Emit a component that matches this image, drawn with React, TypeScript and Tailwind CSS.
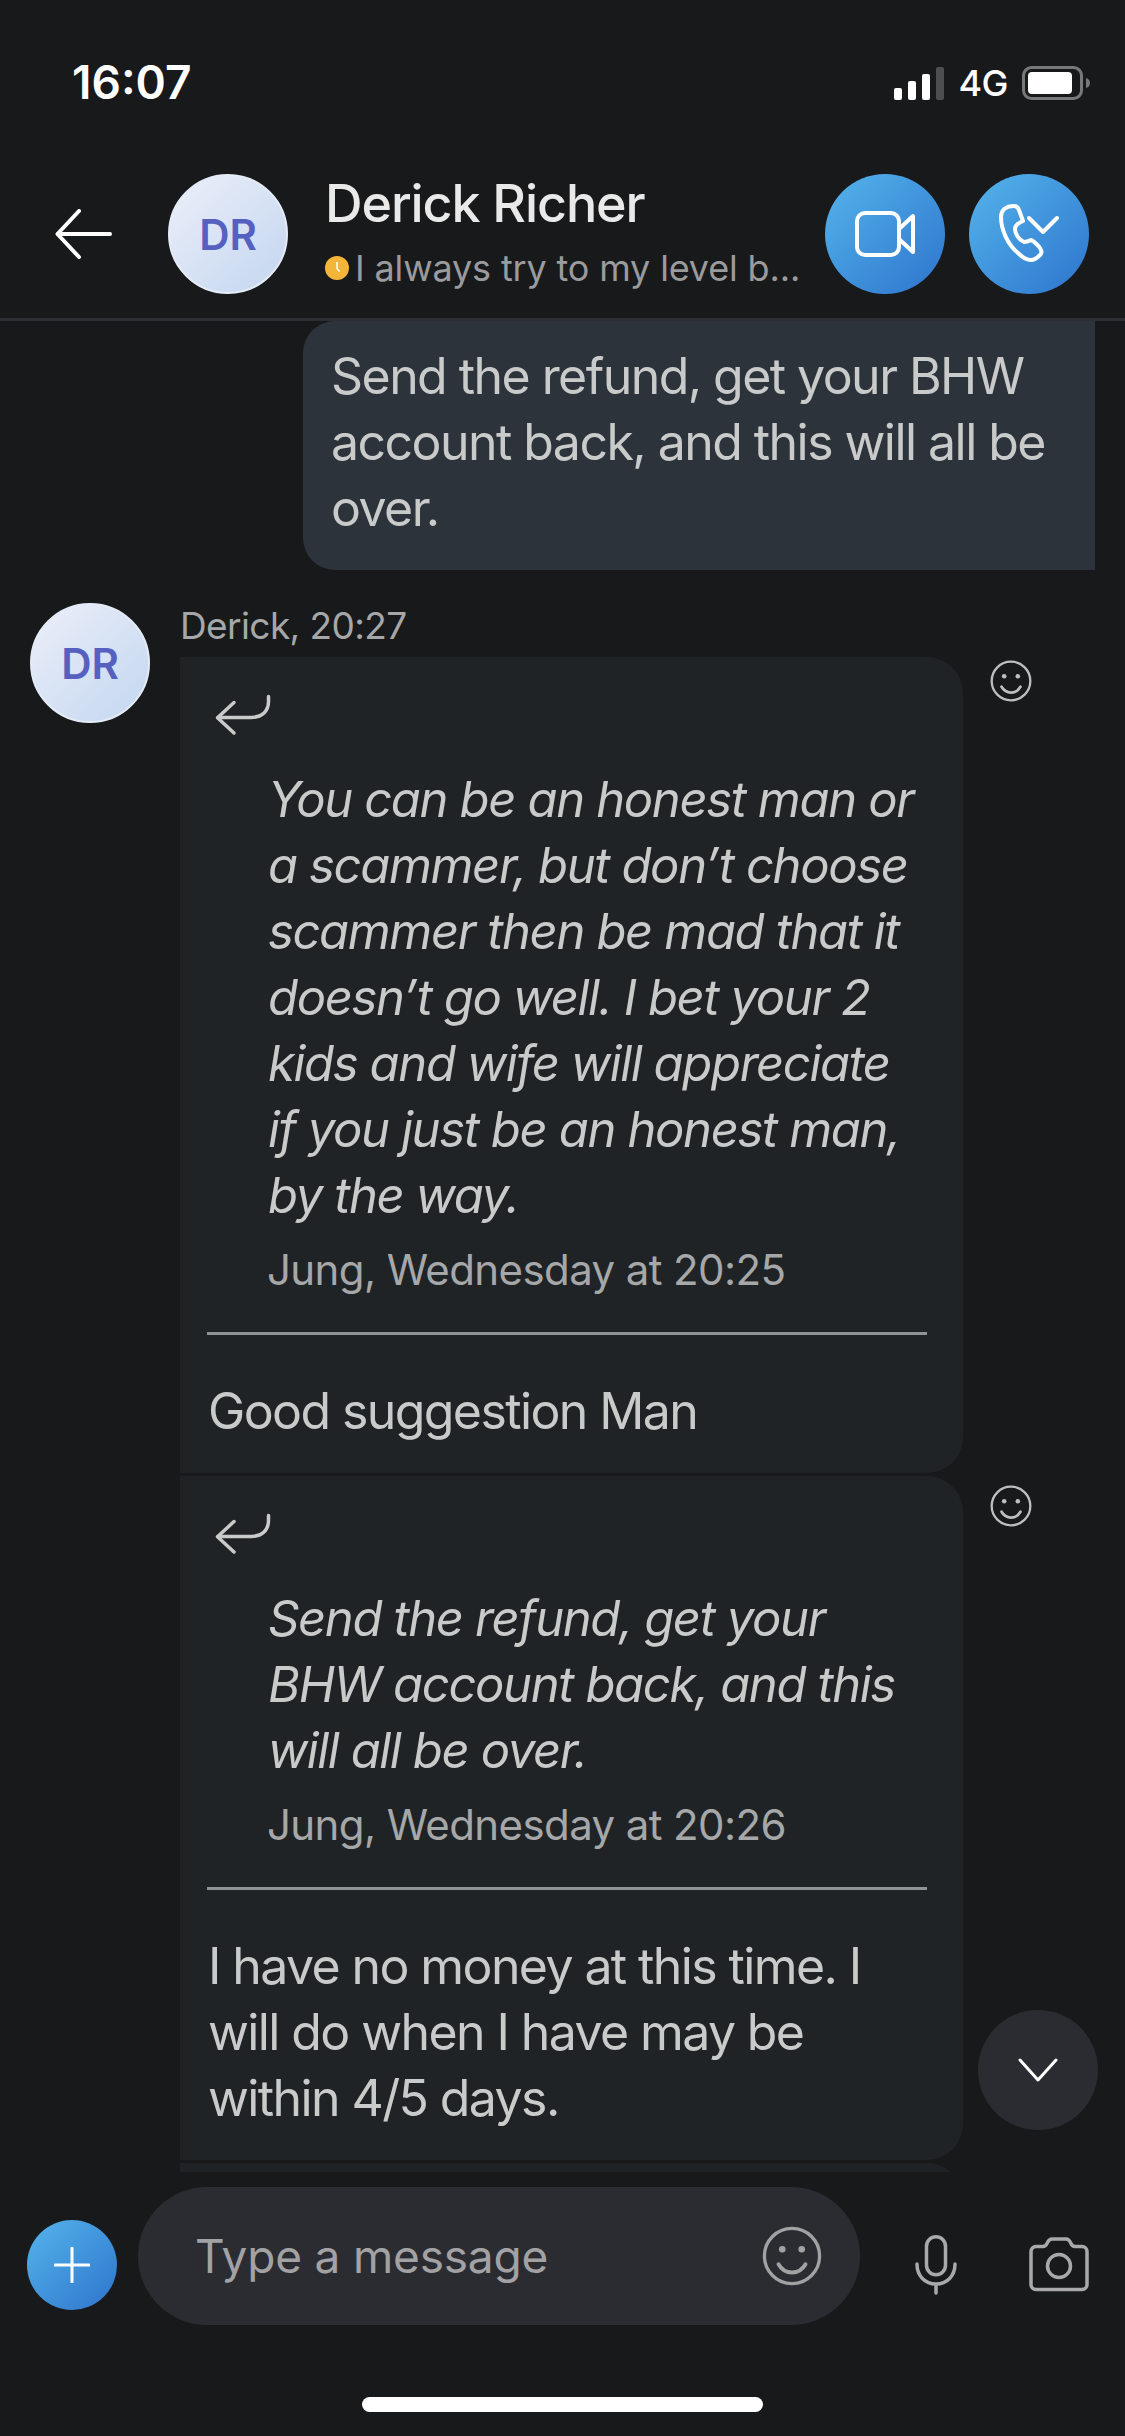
const font = "font-['Inter','Roboto',sans-serif]";

function Avatar() {
  return (
    <div className="flex h-[120px] w-[120px] shrink-0 items-center justify-center rounded-full border-2 border-[#e4ebf7] bg-gradient-to-br from-[#eceff9] to-[#c3d6f0] text-[42px] font-semibold text-[#5560c0]">
      DR
    </div>
  );
}

function Smile({ className }: { className: string }) {
  return (
    <svg viewBox="0 0 40 40" fill="none" stroke="currentColor" strokeWidth="2.2" strokeLinecap="round" className={className}>
      <circle cx="20" cy="20" r="18.4" />
      <circle cx="13.5" cy="15.5" r="2.200" fill="currentColor" stroke="none" />
      <circle cx="26.5" cy="15.5" r="2.200" fill="currentColor" stroke="none" />
      <path d="M11 25.500c2 3.500 5 5.500 9 5.500s7-2 9-5.500" strokeWidth="2.600" />
    </svg>
  );
}

function ReplyArrow() {
  return (
    <svg viewBox="0 0 56 42" fill="none" stroke="#c9caca" strokeWidth="3.5" strokeLinecap="round" strokeLinejoin="round" className="h-[42px] w-[56px]">
      <path d="M53.500 2.500v5c0 10-7 16-17 16H3" />
      <path d="M19 8.500 2.500 23.700 19 39" />
    </svg>
  );
}

function QuotedBubble({
  quote,
  stamp,
  reply,
  smileTop,
}: {
  quote: string[];
  stamp: string;
  reply: string[];
  smileTop: string;
}) {
  return (
    <div className="flex items-start">
      <div className="w-[783px] rounded-r-[36px] bg-[#1f2326] pt-[37px] pb-[29px]">
        <div className="pl-[35px]">
          <ReplyArrow />
        </div>
        <div className="mt-[31px] pl-[88px] text-[49px] leading-[66px] tracking-[-1.37px] text-[#c9caca] italic">
          {quote.map((l) => (
            <div key={l}>{l}</div>
          ))}
        </div>
        <div className="mt-[14px] pl-[87px] text-[42px] leading-[54px] tracking-[-0.6px] text-[#a6a7a8]">{stamp}</div>
        <div className="ml-[27px] mr-[36px] mt-[35px] h-[3px] bg-[#8f9394]" />
        <div className="mt-[43px] pl-[28px] pr-[20px] text-[50px] leading-[66px] tracking-[-1.6px] text-[#c9caca]">
          {reply.map((l) => (
            <div key={l}>{l}</div>
          ))}
        </div>
      </div>
      <Smile className={`ml-[27px] h-[42px] w-[42px] text-[#bdbebe] ${smileTop}`} />
    </div>
  );
}

export default function App() {
  return (
    <div className={`flex h-[2436px] w-[1125px] flex-col overflow-hidden bg-[#18191b] ${font}`}>
      {/* status bar */}
      <div className="flex h-[174px] shrink-0 items-start justify-between pl-[72px] pr-[35px] pt-[57px] text-white">
        <span className="text-[46px] font-semibold leading-[50px]">16:07</span>
        <div className="flex items-center gap-[14px] pt-[6px]">
          <svg viewBox="0 0 50 33" className="h-[33px] w-[50px]">
            <rect x="0" y="21" width="8" height="12" rx="2" fill="#fff" />
            <rect x="14" y="14" width="8" height="19" rx="2" fill="#fff" />
            <rect x="28" y="7" width="8" height="26" rx="2" fill="#fff" />
            <rect x="42" y="0" width="8" height="33" rx="2" fill="#4d4e50" />
          </svg>
          <span className="text-[36px] font-medium leading-[40px] tracking-[-0.5px]">4G</span>
          <svg viewBox="0 0 68 34" className="h-[34px] w-[68px]">
            <rect x="1.500" y="1.500" width="58" height="31" rx="8" fill="none" stroke="#77787a" strokeWidth="3" />
            <rect x="6" y="6" width="44" height="22" rx="4" fill="#fff" />
            <path d="M64 12c2.500.8 4 2.500 4 5s-1.500 4.200-4 5z" fill="#77787a" />
          </svg>
        </div>
      </div>

      {/* header */}
      <div className="flex h-[147px] shrink-0 items-start border-b-[3px] border-[#2d2e34] pl-[55px] pr-[36px]">
        <svg viewBox="0 0 58 50" fill="none" stroke="#fff" strokeWidth="4" strokeLinecap="round" strokeLinejoin="round" className="mt-[35px] h-[50px] w-[58px]">
          <path d="M55 25H3" />
          <path d="M24 2 2.500 25 24 48" />
        </svg>
        <div className="ml-[55px]">
          <Avatar />
        </div>
        <div className="ml-[37px] min-w-0 flex-1">
          <div className="text-[52px] font-medium leading-[60px] tracking-[-1.08px] text-[#e9e9e9]">Derick Richer</div>
          <div className="mt-[11px] flex items-center">
            <svg viewBox="0 0 24 24" className="mr-[6px] h-[24px] w-[24px] shrink-0">
              <circle cx="12" cy="12" r="12" fill="#f4b638" />
              <path d="M12 6v6.500l2.500 3" fill="none" stroke="#fff" strokeWidth="1.500" />
            </svg>
            <span className="text-[36px] leading-[46px] tracking-[-0.15px] text-[#9a9b9c]">I always try to my level b...</span>
          </div>
        </div>
        <div className="flex gap-[24px]">
          <div className="flex h-[120px] w-[120px] items-center justify-center rounded-full bg-gradient-to-br from-[#55b4ea] to-[#2f74cd]">
            <svg viewBox="0 0 60 46" fill="none" stroke="#fff" strokeWidth="4" strokeLinejoin="round" className="h-[46px] w-[60px]">
              <rect x="2" y="2" width="42" height="42" rx="8" />
              <path d="M44 18 58 5v36L44 28z" />
            </svg>
          </div>
          <div className="flex h-[120px] w-[120px] items-center justify-center rounded-full bg-gradient-to-br from-[#55b4ea] to-[#2f74cd]">
            <svg viewBox="0 0 60 60" fill="none" stroke="#fff" strokeWidth="4" strokeLinecap="round" strokeLinejoin="round" className="h-[60px] w-[60px]">
              <path d="M2 13C2 6 7 2 15 2c2 0 4 1 5 4l4 11c-5 2-8 4-8 8 0 5 4 11 9 13 2 0 5-1 7-2 3 1 9 7 10 10 1 2 0 4-1 5-3 3-6 5-9 5-4 0-9-3-13-7C9 41 2 26 2 13z" />
              <path d="M30 14l14 14 14-14" />
            </svg>
          </div>
        </div>
      </div>

      {/* messages */}
      <div className="relative min-h-0 flex-1 overflow-hidden">
        <div className="flex justify-end pr-[30px]">
          <div className="w-[792px] rounded-l-[32px] bg-[#2d333b] pl-[28px] pt-[22px] pb-[29px] text-[50px] leading-[66px] tracking-[-1.55px] text-[#c9caca]">
            <div>Send the refund, get your BHW</div>
            <div>account back, and this will all be</div>
            <div>over.</div>
          </div>
        </div>
        <div className="mt-[33px] flex pl-[30px]">
          <Avatar />
          <div className="ml-[30px]">
            <div className="h-[54px] pt-[3px] text-[37px] leading-[40px] tracking-[-0.6px] text-[#a6a7a8]">Derick, 20:27</div>
            <div className="flex flex-col gap-[3px]">
              <QuotedBubble
                smileTop="mt-[3px]"
                quote={[
                  "You can be an honest man or",
                  "a scammer, but don’t choose",
                  "scammer then be mad that it",
                  "doesn’t go well. I bet your 2",
                  "kids and wife will appreciate",
                  "if you just be an honest man,",
                  "by the way.",
                ]}
                stamp="Jung, Wednesday at 20:25"
                reply={["Good suggestion Man"]}
              />
              <QuotedBubble
                smileTop="mt-[9px]"
                quote={["Send the refund, get your", "BHW account back, and this", "will all be over."]}
                stamp="Jung, Wednesday at 20:26"
                reply={["I have no money at this time. I", "will do when I have may be", "within 4/5 days."]}
              />
              <div className="h-[40px] w-[783px] rounded-tr-[36px] bg-[#1f2326]" />
            </div>
          </div>
        </div>
        <div className="absolute left-[978px] top-[1689px] flex h-[120px] w-[120px] items-center justify-center rounded-full bg-[#2b2c31]">
          <svg viewBox="0 0 40 24" fill="none" stroke="#fff" strokeWidth="3" strokeLinecap="round" strokeLinejoin="round" className="h-[24px] w-[40px]">
            <path d="M2 2l18 20L38 2" />
          </svg>
        </div>
      </div>

      {/* composer */}
      <div className="flex h-[216px] shrink-0 items-start bg-[#18191b] pl-[27px]">
        <div className="mt-[48px] flex h-[90px] w-[90px] items-center justify-center rounded-full bg-gradient-to-br from-[#55b4ea] to-[#2f74cd]">
          <svg viewBox="0 0 36 36" stroke="#fff" strokeWidth="3" strokeLinecap="round" className="h-[36px] w-[36px]">
            <path d="M18 1v34M1 18h34" />
          </svg>
        </div>
        <div className="ml-[21px] mt-[15px] flex h-[138px] w-[722px] items-center justify-between rounded-full bg-[#2b2c31] pl-[57px] pr-[38px]">
          <span className="text-[46px] tracking-[-0.2px] text-[#a2a2a4]">Type a message</span>
          <Smile className="h-[60px] w-[60px] text-[#a2a2a4]" />
        </div>
        <svg viewBox="0 0 42 60" fill="none" stroke="#a9a9ab" strokeWidth="3.500" strokeLinecap="round" className="ml-[55px] mt-[63px] h-[60px] w-[42px]">
          <rect x="11.500" y="1.750" width="19" height="38" rx="9.500" />
          <path d="M2 29c0 12 8 20 19 20s19-8 19-20M21 49v9" />
        </svg>
        <svg viewBox="0 0 60 55" fill="none" stroke="#a9a9ab" strokeWidth="3.500" strokeLinejoin="round" className="ml-[72px] mt-[65px] h-[55px] w-[60px]">
          <path d="M7 9.500h7c2 0 3-1 4-3s2-4.500 5-4.500h14c3 0 4 2 5 4.500s2 3 4 3h7a5 5 0 0 1 5 5v33a5 5 0 0 1-5 5H7a5 5 0 0 1-5-5v-33a5 5 0 0 1 5-5z" />
          <circle cx="30" cy="29" r="11.500" />
        </svg>
      </div>

      {/* home indicator */}
      <div className="flex h-[48px] shrink-0 justify-center bg-[#18191b] pt-[9px]">
        <div className="h-[15px] w-[401px] rounded-full bg-white" />
      </div>
    </div>
  );
}
